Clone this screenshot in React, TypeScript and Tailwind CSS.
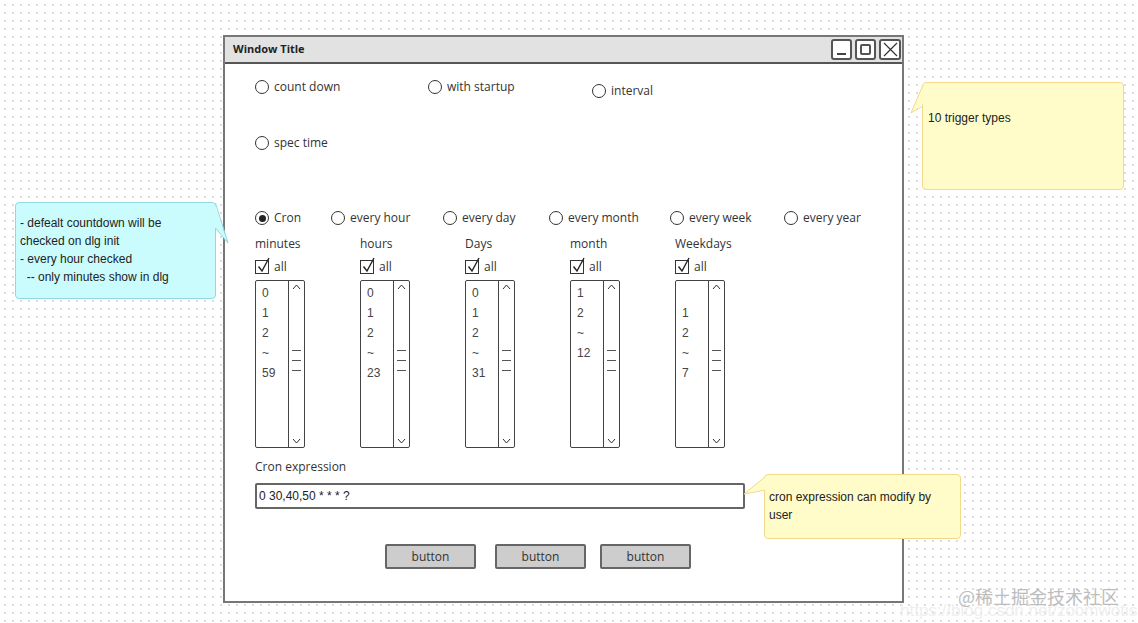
import React from 'react';

const hand = { fontFamily: '"Open Sans", "Noto Sans", sans-serif' };
const plain = { fontFamily: '"Liberation Sans", Arial, sans-serif' };

const Radio: React.FC<{ label: string; checked?: boolean; w: number; className?: string }> = ({ label, checked, w, className }) => (
  <div className={`flex items-center h-5 ${className ?? ''}`} style={{ width: w }}>
    <span className="w-[14px] h-[14px] rounded-full border border-[#333] flex items-center justify-center shrink-0">
      {checked && <span className="w-[7px] h-[7px] rounded-full bg-[#222]" />}
    </span>
    <span className="ml-[5px] text-[12px] text-[#333] whitespace-nowrap">{label}</span>
  </div>
);

const Check: React.FC = () => (
  <div className="flex items-center h-4">
    <span className="relative w-[14px] h-[14px] border border-[#333] shrink-0">
      <svg className="absolute -top-[5px] left-0" width="16" height="18" viewBox="0 0 16 18">
        <path d="M2.5 10.5 L6 15 L13 2" fill="none" stroke="#222" strokeWidth="1.4" />
      </svg>
    </span>
    <span className="ml-[5px] text-[12px] text-[#333]">all</span>
  </div>
);

const ListBox: React.FC<{ items: string[] }> = ({ items }) => (
  <div className="flex w-[50px] h-[168px] border border-[#444] rounded-[2px] bg-white">
    <div className="flex-1 flex flex-col pl-[6px] pt-[2px] text-[12px] leading-[20px] text-[#444]" style={plain}>
      {items.map((t, i) => (
        <span key={i} className="h-5">{t}</span>
      ))}
    </div>
    <div className="w-[16px] border-l border-[#444] flex flex-col items-center justify-between py-[3px]">
      <svg width="9" height="6" viewBox="0 0 9 6">
        <path d="M1 5 L4.5 1 L8 5" fill="none" stroke="#333" strokeWidth="1" />
      </svg>
      <div className="flex flex-col gap-[9px] -mt-[8px]">
        <span className="block w-[9px] h-px bg-[#555]" />
        <span className="block w-[9px] h-px bg-[#555]" />
        <span className="block w-[9px] h-px bg-[#555]" />
      </div>
      <svg width="9" height="6" viewBox="0 0 9 6">
        <path d="M1 1 L4.5 5 L8 1" fill="none" stroke="#333" strokeWidth="1" />
      </svg>
    </div>
  </div>
);

const fields = [
  { label: 'minutes', items: ['0', '1', '2', '~', '59'] },
  { label: 'hours', items: ['0', '1', '2', '~', '23'] },
  { label: 'Days', items: ['0', '1', '2', '~', '31'] },
  { label: 'month', items: ['1', '2', '~', '12'] },
  { label: 'Weekdays', items: ['', '1', '2', '~', '7'] },
];

const Window: React.FC = () => (
  <div className="absolute left-[223px] top-[35px] w-[681px] h-[568px] border-2 border-[#777] bg-white flex flex-col" style={hand}>
    <div className="h-[27px] bg-[#e2e2e2] border-b-2 border-[#555] flex items-center justify-between pl-[8px] pr-[1px]">
      <span className="text-[11px] font-bold text-[#222]">Window Title</span>
      <div className="flex gap-[3px]">
        <div className="w-[21px] h-[21px] border-2 border-[#555] rounded-[3px] bg-white flex items-end justify-center pb-[3px]">
          <span className="block w-[9px] h-[2px] bg-[#444]" />
        </div>
        <div className="w-[21px] h-[21px] border-2 border-[#555] rounded-[3px] bg-white flex items-center justify-center">
          <span className="block w-[11px] h-[11px] border-2 border-[#555] rounded-[2px]" />
        </div>
        <div className="w-[22px] h-[21px] border-2 border-[#555] rounded-[3px] bg-white flex items-center justify-center">
          <svg width="15" height="15" viewBox="0 0 15 15">
            <path d="M1 1 L14 14 M14 1 L1 14" stroke="#333" strokeWidth="1.2" />
          </svg>
        </div>
      </div>
    </div>

    <div className="flex flex-col pl-[30px]">
      <div className="flex mt-[13px]">
        <Radio label="count down" w={173} />
        <Radio label="with startup" w={164} />
        <Radio label="interval" w={120} className="mt-[4px]" />
      </div>
      <div className="flex mt-[32px]">
        <Radio label="spec time" w={120} />
      </div>
      <div className="flex mt-[55px]">
        <Radio label="Cron" checked w={76} />
        <Radio label="every hour" w={112} />
        <Radio label="every day" w={106} />
        <Radio label="every month" w={121} />
        <Radio label="every week" w={114} />
        <Radio label="every year" w={100} />
      </div>

      <div className="flex mt-[8px]">
        {fields.map((f) => (
          <div key={f.label} className="w-[105px] flex flex-col">
            <span className="h-4 leading-4 text-[12px] text-[#333]">{f.label}</span>
            <div className="mt-[7px]">
              <Check />
            </div>
            <div className="mt-[5px]">
              <ListBox items={f.items} />
            </div>
          </div>
        ))}
      </div>

      <span className="mt-[11px] h-4 leading-4 text-[12px] text-[#333]">Cron expression</span>
      <div className="mt-[8px] w-[490px] h-[26px] border-2 border-[#666] rounded-[2px] flex items-center pl-[2px] text-[12px] text-[#222]" style={plain}>
        0 30,40,50 * * * ?
      </div>

      <div className="flex mt-[35px] ml-[130px]">
        <button className="w-[91px] h-[25px] bg-[#cdcdcd] border-2 border-[#666] rounded-[2px] text-[12px] text-[#333]">button</button>
        <button className="ml-[19px] w-[91px] h-[25px] bg-[#cdcdcd] border-2 border-[#666] rounded-[2px] text-[12px] text-[#333]">button</button>
        <button className="ml-[14px] w-[91px] h-[25px] bg-[#cdcdcd] border-2 border-[#666] rounded-[2px] text-[12px] text-[#333]">button</button>
      </div>
    </div>
  </div>
);

export default function App() {
  return (
    <div
      className="relative w-[1138px] h-[623px] overflow-hidden bg-white bg-[radial-gradient(circle,#dcdcdc_0.8px,transparent_1px)] bg-[size:8px_8px] bg-[position:1px_1px]"
      style={plain}
    >
      <Window />

      {/* yellow note: trigger types */}
      <div className="absolute left-[922px] top-[82px] w-[202px] h-[108px] bg-[#fffcc9] border border-[#f2d98c] rounded-[4px] pl-[5px] pt-[26px] text-[12px] leading-[18px] text-[#222]">
        10 trigger types
      </div>
      <svg className="absolute left-[910px] top-[82px]" width="16" height="34" viewBox="0 0 16 34">
        <path d="M13.5 1 L13 22 L1 31 Z" fill="#fffcc9" />
        <path d="M13 3 L1 31 L13 24" fill="none" stroke="#f2d98c" strokeWidth="1" />
      </svg>

      {/* blue note */}
      <div className="absolute left-[15px] top-[202px] w-[201px] h-[97px] bg-[#cbfcfd] border border-[#8fd8e4] rounded-[4px] pl-[4px] pt-[11px] text-[12px] leading-[18px] text-[#222] whitespace-pre">
        {'- defealt countdown will be\nchecked on dlg init\n- every hour checked\n  -- only minutes show in dlg'}
      </div>
      <svg className="absolute left-[212px] top-[202px]" width="18" height="44" viewBox="0 0 18 44">
        <path d="M2.5 1 L3 26 L16 41 Z" fill="#cbfcfd" />
        <path d="M3.5 1 L16 41 L3.5 26" fill="none" stroke="#8fd8e4" strokeWidth="1" />
      </svg>

      {/* yellow note: cron expression */}
      <div className="absolute left-[764px] top-[474px] w-[197px] h-[65px] bg-[#fffcc9] border border-[#f2d98c] rounded-[4px] pl-[4px] pt-[13px] text-[12px] leading-[18px] text-[#222]">
        cron expression can modify by
        <br />
        user
      </div>
      <svg className="absolute left-[743px] top-[475px]" width="24" height="22" viewBox="0 0 24 22">
        <path d="M22 1 L22 15 L1 19 Z" fill="#fffcc9" />
        <path d="M22 2 L1 19 L22 15" fill="none" stroke="#f2d98c" strokeWidth="1" />
      </svg>

      {/* watermark */}
      <span className="absolute left-[900px] top-[598px] text-[17px] text-[#eeeeee] whitespace-nowrap">
        https://blog.csdn.net/zoomwotis
      </span>
      <span
        className="absolute left-[958px] top-[583px] text-[18px] text-[#bdbdbd] whitespace-nowrap"
        style={{ fontFamily: '"Noto Sans CJK SC", sans-serif' }}
      >
        @稀土掘金技术社区
      </span>
    </div>
  );
}
